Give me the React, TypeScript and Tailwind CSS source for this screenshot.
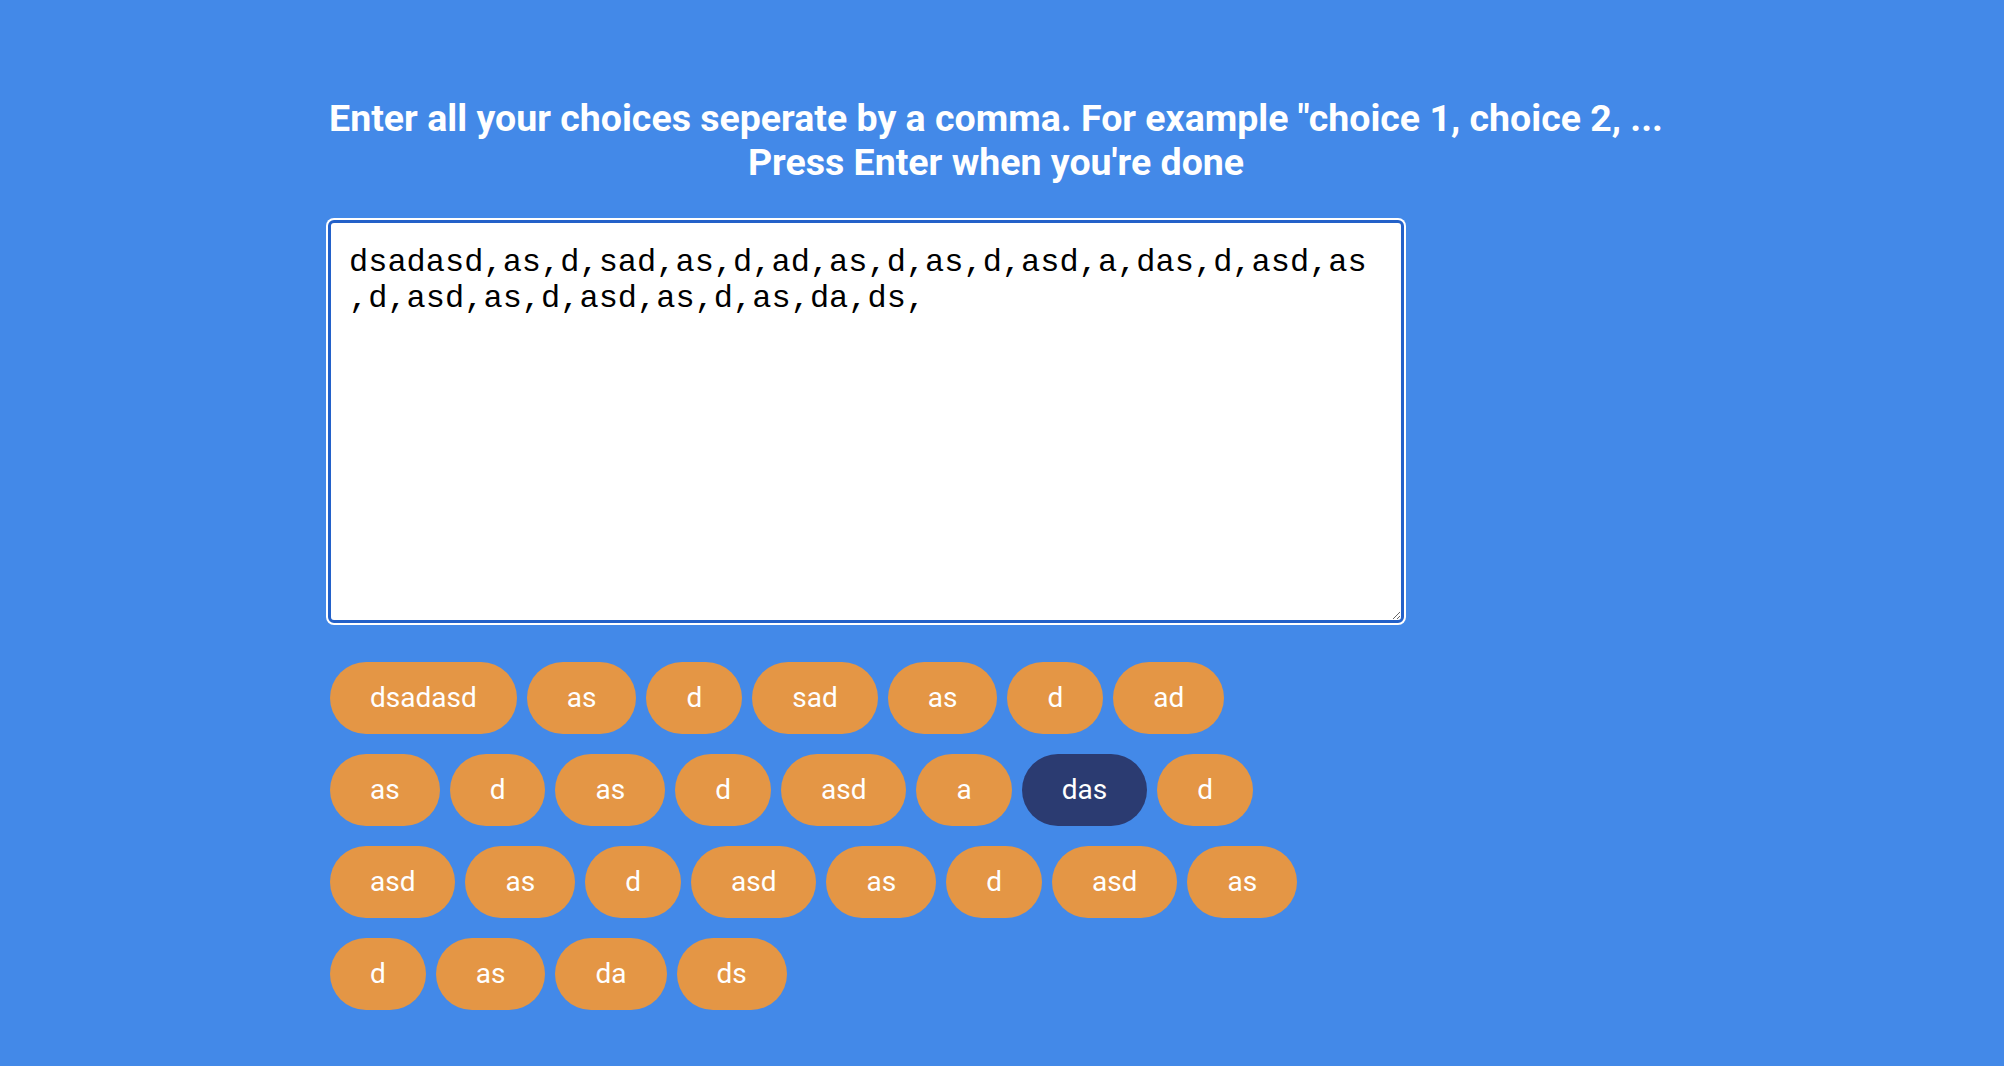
import { useEffect, useRef } from 'react';

const TEXT =
  'dsadasd,as,d,sad,as,d,ad,as,d,as,d,asd,a,das,d,asd,as,d,asd,as,d,asd,as,d,as,da,ds,';

const choices = TEXT.split(',')
  .map((c) => c.trim())
  .filter(Boolean);

const SELECTED = 13;

export default function App() {
  const inputRef = useRef<HTMLTextAreaElement>(null);

  useEffect(() => {
    const el = inputRef.current;
    if (!el) return;
    el.focus();
    el.setSelectionRange(TEXT.length, TEXT.length);
  }, []);

  return (
    <div className="min-h-screen w-full bg-[#4389e8] font-['Roboto',sans-serif]">
      <div className="ml-[328px] w-[1336px] pt-[96px]">
        <h1 className="text-center text-[37.5px] leading-[44px] font-bold text-white">
          Enter all your choices seperate by a comma. For example "choice 1, choice 2, ...
          <br />
          Press Enter when you're done
        </h1>

        <textarea
          ref={inputRef}
          defaultValue={TEXT}
          spellCheck={false}
          className="mt-[36px] block w-[1076px] h-[403px] rounded-[6px] border-[3px] border-[#2361c9] bg-white px-[18px] pt-[22px] pb-4 font-['Liberation_Mono',monospace] text-[32px] leading-[36px] text-black caret-black shadow-[0_0_0_2px_#ffffff] outline-none"
        />

        <div className="mt-[39px] ml-[2px] flex w-[990px] flex-wrap gap-x-[10px] gap-y-5">
          {choices.map((c, i) => (
            <div
              key={i}
              className={
                i === SELECTED
                  ? 'flex h-[72px] items-center rounded-full bg-[#2b3b71] px-10 text-[28px] text-white'
                  : 'flex h-[72px] items-center rounded-full bg-[#e49645] px-10 text-[28px] text-white'
              }
            >
              {c}
            </div>
          ))}
        </div>
      </div>
    </div>
  );
}
